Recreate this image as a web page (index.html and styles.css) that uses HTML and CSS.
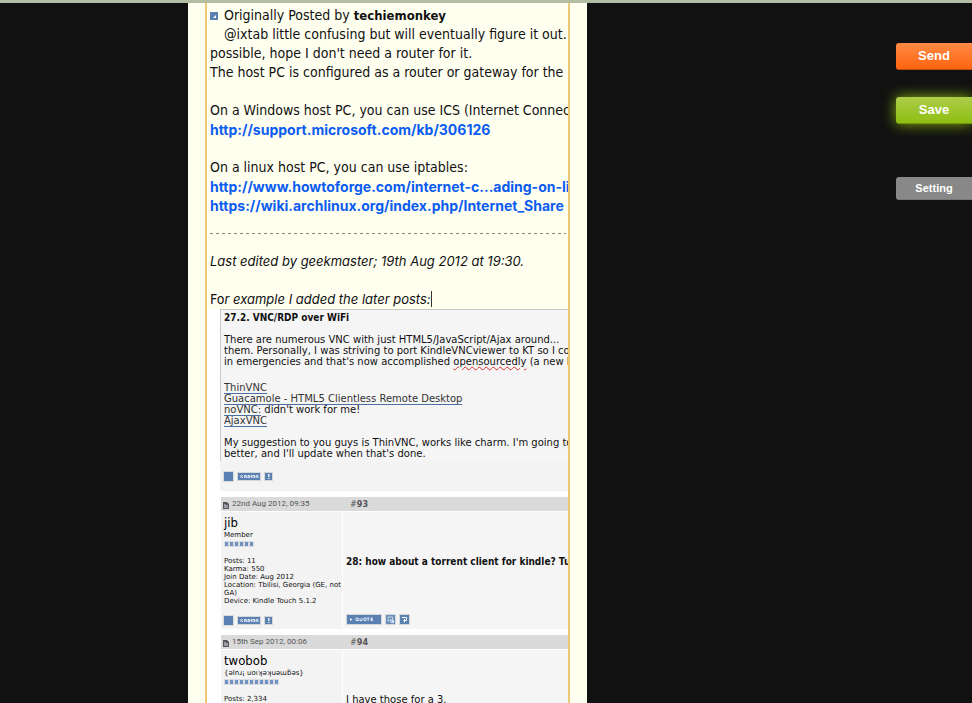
FILE: index.html
```
<!DOCTYPE html>
<html lang="en">
<head>
<meta charset="utf-8">
<title>Post editor</title>
<link rel="stylesheet" href="styles.css">
</head>
<body>
<svg class="defs" aria-hidden="true">
  <symbol id="doc" viewBox="0 0 6 7"><path d="M0 0h4l2 2v5H0z" fill="#555560"/><path d="M1 2h2v1h2v3H1z" fill="#9a9aa5"/></symbol>
  <symbol id="square" viewBox="0 0 11 11"><path d="M0 0h11v11H0z" fill="#d8dade"/><path d="M1 1h9v9H1z" fill="#5b80b2"/></symbol>
  <symbol id="karma" viewBox="0 0 24 9"><path d="M0 0h24v9H0z" fill="#d4d6da"/><path d="M1 1h22v7H1z" fill="#5b80b2"/><path d="M4 3v3M6 3L4.500 4.500 6 6M7.500 6V3.500h2V6M7.500 5h2M11 6V3.500h2V5h-2l2 1M14.500 6V3.500h3V6M16 3.500V6M19 6V3.500h2V6M19 5h2" fill="none" stroke="#e8eef6" stroke-width=".9"/></symbol>
  <symbol id="alert" viewBox="0 0 9 9"><path d="M0 0h9v9H0z" fill="#d4d6da"/><path d="M1 1h7v7H1z" fill="#5b80b2"/><path d="M4 2h1.500v3H4zM4 6h1.500v1H4z" fill="#e8eef6"/></symbol>
  <symbol id="quote" viewBox="0 0 36 11"><path d="M0 0h36v11H0z" fill="#d4d6da"/><path d="M1 1h34v9H1z" fill="#5b80b2"/><path d="M4 4l2.500 1.500L4 7z" fill="#e8eef6"/><path d="M10 4h2v2.500h-2zM12 6l.8 1M14 4v2.500h2V4M18 4h2v2.500h-2zM21 4h2.500M22.200 4v3M27 4h-2v2.500h2M25 5.300h2" fill="none" stroke="#e8eef6" stroke-width=".9"/></symbol>
  <symbol id="multi" viewBox="0 0 11 11"><path d="M0 0h11v11H0z" fill="#d4d6da"/><path d="M1 1h9v9H1z" fill="#6c8fbd"/><path d="M3 3h4.500v4H3z" fill="none" stroke="#c5d4e6"/><path d="M5 5l3.500 3.500M8.500 6v2.500H6" fill="none" stroke="#dbe5f0"/></symbol>
  <symbol id="reply" viewBox="0 0 11 11"><path d="M0 0h11v11H0z" fill="#d4d6da"/><path d="M1 1h9v9H1z" fill="#5b80b2"/><path d="M3 3.500h4.500v3H4.500M5.500 5v3.500" fill="none" stroke="#fff"/></symbol>
</svg>
<div class="topbar"></div>
<div class="workspace">
  <main class="page">
    <div class="editor">
      <div class="note">
        <p><svg class="jump" viewBox="0 0 8 8" aria-hidden="true"><path d="M0 0h8v8H0z" fill="#5b80b2"/><path d="M6 3v3H3z" fill="#fff"/></svg>Originally Posted by <b>techiemonkey</b></p>
        <p class="indent">@ixtab little confusing but will eventually figure it out. Thanks</p>
        <p>possible, hope I don't need a router for it.</p>
        <p>The host PC is configured as a router or gateway for the</p>
        <br>
        <p>On a Windows host PC, you can use ICS (Internet Connection</p>
        <p><a href="#">http://support.microsoft.com/kb/306126</a></p>
        <br>
        <p>On a linux host PC, you can use iptables:</p>
        <p><a href="#">http://www.howtoforge.com/internet-c...ading-on-linux</a></p>
        <p><a href="#">https://wiki.archlinux.org/index.php/Internet_Share</a></p>
        <hr>
        <p><i>Last edited by geekmaster; 19th Aug 2012 at 19:30.</i></p>
        <br>
        <p>Fo<i>r example I added the later posts:</i><span class="caret"></span></p>
      </div>
      <div class="clip">
        <article class="excerpt">
          <div class="quoted">
            <p><b>27.2. VNC/RDP over WiFi</b></p>
            <br>
            <p>There are numerous VNC with just HTML5/JavaScript/Ajax around...</p>
            <p>them. Personally, I was striving to port KindleVNCviewer to KT so I could</p>
            <p>in emergencies and that's now accomplished <span class="typo">opensourcedly</span> (a new E</p>
            <div class="links">
              <p><a href="#">ThinVNC</a></p>
              <p><a href="#">Guacamole - HTML5 Clientless Remote Desktop</a></p>
              <p><a href="#">noVNC:</a> didn't work for me!</p>
              <p><a href="#">AjaxVNC</a></p>
            </div>
            <p>My suggestion to you guys is ThinVNC, works like charm. I'm going to</p>
            <p>better, and I'll update when that's done.</p>
          </div>
          <div class="tools"><svg width="11" height="11"><use href="#square"/></svg><svg width="24" height="9"><use href="#karma"/></svg><svg width="9" height="9"><use href="#alert"/></svg></div>
        </article>
        <article class="post">
          <header><svg width="6" height="7"><use href="#doc"/></svg><time>22nd Aug 2012, 09:35</time><span class="num">#<b>93</b></span></header>
          <div class="cells">
            <section class="user">
              <h2>jib</h2>
              <p>Member</p>
              <div class="rank"><i></i><i></i><i></i><i></i><i></i><i></i></div>
              <div class="facts">
                <p>Posts: 11</p>
                <p>Karma: 550</p>
                <p>Join Date: Aug 2012</p>
                <p>Location: Tbilisi, Georgia (GE, not<br>GA)</p>
                <p>Device: Kindle Touch 5.1.2</p>
              </div>
              <div class="tools"><svg width="11" height="11"><use href="#square"/></svg><svg width="24" height="9"><use href="#karma"/></svg><svg width="9" height="9"><use href="#alert"/></svg></div>
            </section>
            <section class="message">
              <p><b>28: how about a torrent client for kindle? Turns</b></p>
              <div class="tools reply"><svg width="36" height="11"><use href="#quote"/></svg><svg width="11" height="11"><use href="#multi"/></svg><svg width="11" height="11"><use href="#reply"/></svg></div>
            </section>
          </div>
        </article>
        <article class="post">
          <header><svg width="6" height="7"><use href="#doc"/></svg><time>15th Sep 2012, 00:06</time><span class="num">#<b>94</b></span></header>
          <div class="cells">
            <section class="user">
              <h2>twobob</h2>
              <p>{ǝlnɹ¡ uoıʞǝʞuǝɯƃǝs}</p>
              <div class="rank"><i></i><i></i><i></i><i></i><i></i><i></i><i></i><i></i><i></i><i></i><i></i></div>
              <div class="facts"><p>Posts: 2,334</p></div>
            </section>
            <section class="message"><p>I have those for a 3.</p></section>
          </div>
        </article>
      </div>
    </div>
  </main>
  <aside class="actions">
    <button class="send" type="button">Send</button>
    <button class="save" type="button">Save</button>
    <button class="setting" type="button">Setting</button>
  </aside>
</div>
</body>
</html>
```
FILE: styles.css
```
* { box-sizing: border-box; }
html, body { height: 100%; }
body {
  margin: 0;
  display: flex;
  flex-direction: column;
  overflow: hidden;
  background: #111;
  color: #111;
  font: 14px/19px "DejaVu Sans Condensed", "DejaVu Sans", Verdana, sans-serif;
}
p, h2 { margin: 0; }
.defs { display: none; }
.topbar { flex: none; height: 3px; background: #b3bda4; }
.workspace {
  flex: 1;
  min-height: 0;
  display: grid;
  grid-template-columns: 188px minmax(0, 1fr) 385px;
}
.page {
  grid-column: 2;
  min-height: 0;
  overflow: hidden;
  padding: 0 17px;
  background: #fffff0;
}
.editor {
  height: 100%;
  overflow: hidden;
  border: solid #ecc978;
  border-width: 0 2px;
  white-space: nowrap;
}
.note { padding: 3px 0 0 3px; }
.note p { height: 19px; }
.note a {
  color: #0b5cf0;
  font-family: Inter, "DejaVu Sans", sans-serif;
  font-weight: bold;
  text-decoration: none;
}
.note b { font-size: 13px; }
.note i { font-family: Inter, "DejaVu Sans", sans-serif; font-size: 13px; }
.jump { width: 8px; height: 8px; margin-right: 6px; }
.indent { padding-left: 14px; }
hr {
  height: 1px;
  margin: 18px 2px 18px 0;
  border: 0;
  background: repeating-linear-gradient(90deg, #888878 0 3px, transparent 3px 6px);
}
.caret {
  display: inline-block;
  width: 1px;
  height: 16px;
  vertical-align: -3px;
  background: #333;
}

.clip { padding-left: 13px; background: #fff; }
.excerpt { background: #f3f3f3; }
.quoted {
  padding: 2px 0 2px 3px;
  border: solid #c8c8c8;
  border-width: 1px 0 0 1px;
  background: #f5f5f5;
  font: 10px/11px "DejaVu Sans", Verdana, sans-serif;
}
.quoted b, .message b { font-family: "DejaVu Sans Condensed", "DejaVu Sans", sans-serif; }
.quoted a {
  color: #333;
  text-decoration: none;
  border-bottom: 1px solid #4a70a4;
}
.links { padding: 15px 0 11px; }
.typo { text-decoration: underline wavy #e03030 1px; }
.tools { display: flex; align-items: center; gap: 3px; }
.excerpt .tools { height: 30px; padding-left: 3px; }

.post { margin: 6px 0 0 1px; }
.post header {
  display: flex;
  align-items: center;
  height: 14px;
  padding-left: 2px;
  background: #dadada;
  color: #555;
  font: 8px/14px Roboto, "DejaVu Sans", sans-serif;
}
.post header svg { margin: 3px 3px 0 0; }
.post time { width: 118px; }
.post .num { font: 9px/14px "DejaVu Sans Condensed", "DejaVu Sans", sans-serif; }
.cells {
  display: grid;
  grid-template-columns: 121px minmax(0, 1fr);
  gap: 1px;
  margin-top: 1px;
}
.user {
  padding: 3px 0 3px 2px;
  background: #f3f3f3;
  font: 7px/8px "DejaVu Sans", Verdana, sans-serif;
}
.user h2, .user p { padding-left: 1px; }
.user h2 {
  font: 13px/16px "DejaVu Sans Condensed", "DejaVu Sans", sans-serif;
  color: #000;
}
.rank { display: flex; padding: 2px 0 1px 1px; }
.rank i { width: 5px; height: 6px; background: #7192c0; border: solid #d9dde2; border-width: 1px 1px 1px 1px; }
.facts { padding-top: 9px; }
.user .tools { padding-top: 10px; }
.message {
  display: flex;
  flex-direction: column;
  padding: 44px 0 4px 3px;
  background: #f5f5f5;
  font: 10px/11px "DejaVu Sans", Verdana, sans-serif;
}
.reply { margin-top: auto; }

.actions {
  display: flex;
  flex-direction: column;
  align-items: flex-end;
  padding-top: 40px;
}
.actions button {
  width: 76px;
  height: 27px;
  padding: 0;
  border: 0;
  border-radius: 3px 0 0 3px;
  color: #fff;
  font: bold 13px/26px "Liberation Sans", Arial, sans-serif;
}
.actions .send { background: linear-gradient(#ff8a45, #ff6410); border-bottom: 1px solid #c04c0c; }
.actions .save {
  margin-top: 27px;
  background: linear-gradient(#accd4a, #8fbe12);
  border-bottom: 1px solid #6f9410;
  box-shadow: 0 0 14px #8ab00f;
}
.actions .setting {
  height: 23px;
  margin-top: 53px;
  background: #888;
  border-bottom: 1px solid #777;
  font-size: 11px;
  line-height: 20px;
}
```
